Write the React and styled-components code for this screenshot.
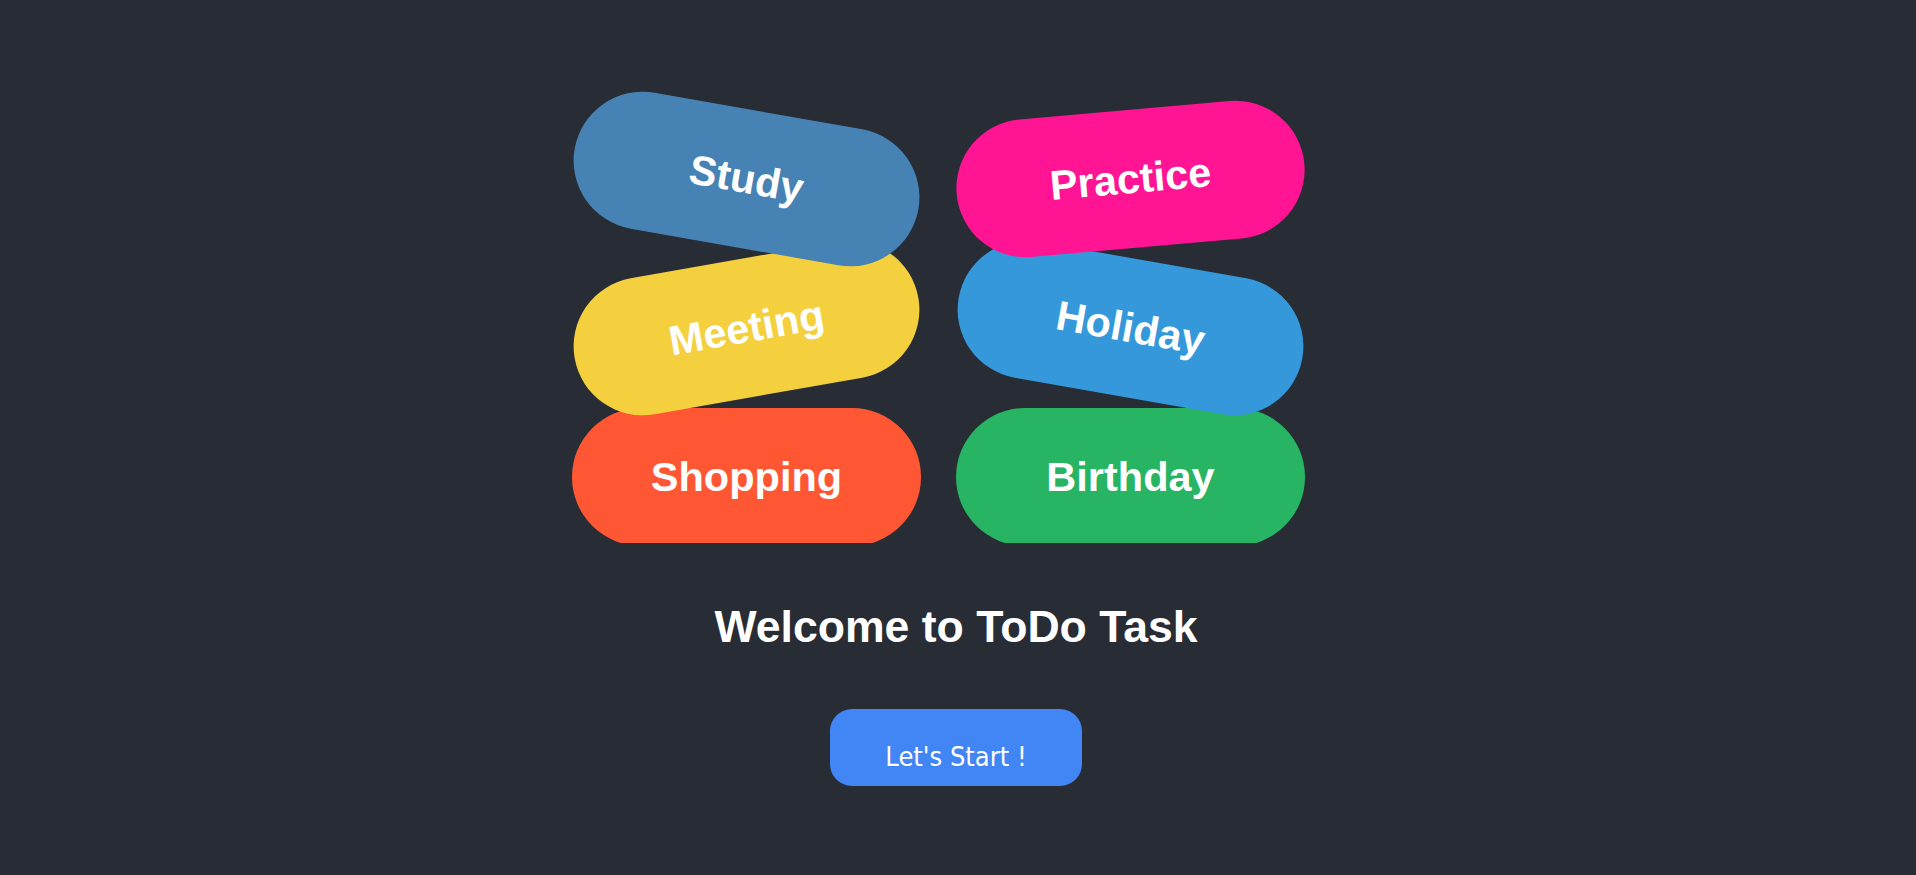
import React from "react";
import styled, { createGlobalStyle } from "styled-components";

const GlobalStyle = createGlobalStyle`
  html, body {
    margin: 0;
    padding: 0;
    background: #282c34;
  }
  * { box-sizing: border-box; }
`;

const Page = styled.div`
  min-height: 100vh;
  padding-right: 4px;
  background: #282c34;
  display: flex;
  flex-direction: column;
  align-items: center;
  font-family: "Liberation Sans", Arial, sans-serif;
`;

const TagArea = styled.div`
  width: 768px;
  height: 543px;
  padding: 110px 35px 0 0;
  overflow: hidden;
`;

const TagGrid = styled.div`
  display: grid;
  grid-template-columns: 349px 349px;
  grid-auto-rows: 138px;
  column-gap: 35px;
  row-gap: 11px;
`;

const Tag = styled.div`
  position: relative;
  z-index: ${(p) => p.$layer};
  display: flex;
  align-items: center;
  justify-content: center;
  width: 349px;
  height: 138px;
  border-radius: 69px;
  background: ${(p) => p.$color};
  color: #ffffff;
  font-family: "Liberation Sans", Arial, sans-serif;
  font-weight: 700;
  font-size: 41.5px;
  transform: rotate(${(p) => p.$angle}deg);
`;

const Title = styled.h1`
  margin: 59px 0 0;
  color: #ffffff;
  font-family: "Liberation Sans", Arial, sans-serif;
  font-weight: 700;
  font-size: 44.6px;
  line-height: normal;
`;

const StartButton = styled.button`
  margin-top: 57px;
  width: 252px;
  height: 77px;
  padding: 17px 0 0;
  border: none;
  border-radius: 22px;
  background: #4285f4;
  color: #ffffff;
  font-family: "DejaVu Sans Condensed", "DejaVu Sans", sans-serif;
  font-stretch: condensed;
  font-size: 27px;
  display: flex;
  align-items: center;
  justify-content: center;
  cursor: pointer;
`;

const tags = [
  { label: "Study", color: "#4682b4", angle: 10, layer: 3 },
  { label: "Practice", color: "#ff1493", angle: -5, layer: 3 },
  { label: "Meeting", color: "#f4d03f", angle: -10, layer: 2 },
  { label: "Holiday", color: "#3498db", angle: 10, layer: 2 },
  { label: "Shopping", color: "#ff5733", angle: 0, layer: 1 },
  { label: "Birthday", color: "#27b463", angle: 0, layer: 1 },
];

export default function App() {
  return (
    <>
      <GlobalStyle />
      <Page>
        <TagArea>
          <TagGrid>
            {tags.map((t) => (
              <Tag key={t.label} $color={t.color} $angle={t.angle} $layer={t.layer}>
                {t.label}
              </Tag>
            ))}
          </TagGrid>
        </TagArea>
        <Title>Welcome to ToDo Task</Title>
        <StartButton>Let's Start !</StartButton>
      </Page>
    </>
  );
}
